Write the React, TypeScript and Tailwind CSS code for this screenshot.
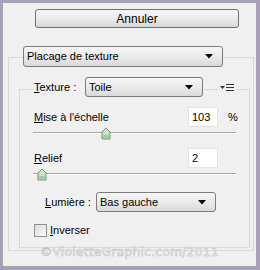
import React from 'react';

const ui = "font-['Liberation_Sans',Arial,sans-serif] text-[11px] text-black";

const Arrow = () => (
  <svg width="8" height="5" viewBox="0 0 8 5" className="shrink-0">
    <path d="M0 0 L8 0 L4 4.5 Z" fill="#000" />
  </svg>
);

const Combo = ({ label, className }: { label: string; className: string }) => (
  <div
    className={`flex items-center justify-between rounded-[3px] border border-[#7b7b7b] bg-gradient-to-b from-[#f6f6f6] via-[#ebebeb] to-[#d9d9d9] pl-[3px] pr-[9px] ${className}`}
  >
    <span className="leading-none">{label}</span>
    <Arrow />
  </div>
);

const Slider = ({ pos }: { pos: number }) => (
  <div className="relative ml-[13px] h-[14px] w-[203px]">
    <div className="absolute left-0 right-0 top-[5px] h-[1px] bg-[#a8a8a8]" />
    <div className="absolute left-0 right-0 top-[6px] h-[1px] bg-[#ffffff]" />
    {/* thumb */}
    <svg
      width="10"
      height="13"
      viewBox="0 0 10 13"
      className="absolute top-0"
      style={{ left: pos - 5 }}
    >
      <path d="M1 5 L5 1 L9 5 L9 12 L1 12 Z" fill="#c6e6c8" stroke="#7d8c7e" strokeWidth="1" />
      <path d="M2 8 L8 8 L8 11 L2 11 Z" fill="#9fcfa4" />
    </svg>
  </div>
);

const Field = ({ value }: { value: string }) => (
  <div className="flex h-[20px] w-[30px] items-center border border-[#e3e3e3] bg-white pl-[3px] leading-none">
    {value}
  </div>
);

export default function App() {
  return (
    <div className={`h-[270px] w-[260px] bg-[#a8a2b8] pb-[4px] pl-[3px] pr-[4px] pt-[3px] ${ui}`}>
      <div className="relative h-full bg-[#f0f0f0] pt-[6px]">
        <button className="ml-[32px] flex h-[19px] w-[204px] items-center justify-center rounded-[3px] border border-[#707070] bg-gradient-to-b from-[#f4f4f4] via-[#ebebeb] to-[#d8d8d8] text-[12px]">
          Annuler
        </button>

        {/* outer group */}
        <div className="ml-[5px] mt-[29px] h-[194px] w-[246px] border border-[#d9d9d9]">
          <Combo label="Placage de texture" className="-mt-[12px] ml-[14px] h-[21px] w-[200px]" />

          {/* inner group */}
          <div className="ml-[10px] mt-[22px] h-[159px] w-[231px] border border-[#d9d9d9]">
            <div className="-mt-[13px] flex h-[20px] items-center">
              <span className="ml-[11px] w-[54px] bg-[#f0f0f0] px-[3px] leading-none">
                <span className="underline">T</span>exture :
              </span>
              <Combo label="Toile" className="h-[20px] w-[118px]" />
              <span className="ml-[15px] flex items-center gap-[1px] bg-[#f0f0f0] px-[2px]">
                <svg width="5" height="3" viewBox="0 0 5 3">
                  <path d="M0 0 L5 0 L2.5 3 Z" fill="#333" />
                </svg>
                <svg width="8" height="7" viewBox="0 0 8 7">
                  <path d="M0 0.5 H8 M0 3.5 H8 M0 6.5 H8" stroke="#333" strokeWidth="1" />
                </svg>
              </span>
            </div>

            <div className="mt-[10px] flex items-center">
              <span className="ml-[14px] w-[154px]">
                <span className="underline">M</span>ise à l'échelle
              </span>
              <Field value="103" />
              <span className="ml-[10px]">%</span>
            </div>
            <Slider pos={73} />

            <div className="mt-[7px] flex items-center">
              <span className="ml-[14px] w-[154px]">
                <span className="underline">R</span>elief
              </span>
              <Field value="2" />
            </div>
            <Slider pos={9} />

            <div className="mt-[10px] flex items-center">
              <span className="ml-[25px] w-[51px]">
                <span className="underline">L</span>umière :
              </span>
              <Combo label="Bas gauche" className="h-[20px] w-[120px]" />
            </div>

            <div className="mt-[10px] flex items-center">
              <span className="ml-[14px] h-[13px] w-[13px] border border-[#8e8f8f] bg-gradient-to-br from-[#dcdcdc] to-[#fbfbfb]" />
              <span className="ml-[3px]">
                <span className="underline">I</span>nverser
              </span>
            </div>
          </div>
        </div>

        {/* watermark */}
        <div className="absolute left-0 right-0 top-[240px] text-center font-['DejaVu_Sans',sans-serif] text-[12px] tracking-[0.4px] text-[#f9f9f9] [-webkit-text-stroke:0.6px_#c4c4c4]">
          ©VioletteGraphic.com/2011
        </div>
      </div>
    </div>
  );
}
